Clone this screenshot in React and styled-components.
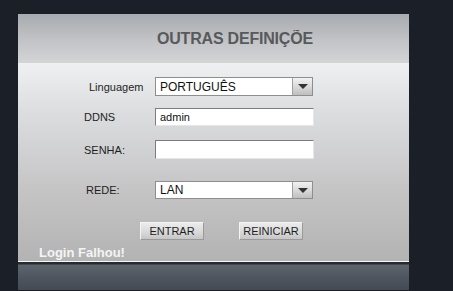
import React from "react";
import styled, { createGlobalStyle } from "styled-components";

const Global = createGlobalStyle`
  html, body {
    margin: 0;
    padding: 0;
    background: #1b2028;
    font-family: "Liberation Sans", Arial, sans-serif;
  }
`;

const Page = styled.div`
  width: 453px;
  height: 291px;
  overflow: hidden;
  background: #1b2028;
  padding: 14px 0 0 18px;
  box-sizing: border-box;
`;

const Panel = styled.div`
  width: 391px;
  display: flex;
  flex-direction: column;
`;

const Header = styled.div`
  height: 49px;
  display: flex;
  align-items: center;
  padding-left: 139px;
  background: linear-gradient(to bottom, #a8abaf 0%, #c2c4c7 55%, #d3d4d6 100%);
`;

const Title = styled.h1`
  margin: 0;
  width: 156px;
  overflow: hidden;
  white-space: nowrap;
  font-size: 16px;
  font-weight: bold;
  color: #58595b;
  letter-spacing: -0.2px;
`;

const Body = styled.div`
  height: 198px;
  box-sizing: border-box;
  padding-top: 14px;
  background: linear-gradient(to bottom, #eff0f2 0%, #dcdddf 25%, #c4c4c5 65%, #b3b3b3 100%);
  display: flex;
  flex-direction: column;
`;

const Row = styled.div`
  display: flex;
  align-items: center;
  height: ${(p) => p.$h}px;
  margin-top: ${(p) => p.$top || 0}px;
`;

const Label = styled.label`
  width: 137px;
  box-sizing: border-box;
  padding-left: ${(p) => p.$indent}px;
  font-size: 11px;
  color: #1e1e1e;
`;

const Select = styled.div`
  width: 158px;
  height: 100%;
  box-sizing: border-box;
  border: 1px solid #8e8e8e;
  background: #fff;
  display: flex;
  align-items: center;
  font-size: 12px;
  color: #111;
  span {
    flex: 1;
    padding-left: 4px;
  }
`;

const Arrow = styled.div`
  width: 20px;
  height: 100%;
  box-sizing: border-box;
  border-left: 1px solid #a0a0a0;
  background: linear-gradient(to bottom, #f2f2f2 0%, #dadada 50%, #bfbfbf 100%);
  display: flex;
  align-items: center;
  justify-content: center;
  &::after {
    content: "";
    border-left: 5px solid transparent;
    border-right: 5px solid transparent;
    border-top: 5px solid #333;
  }
`;

const Input = styled.input`
  width: 159px;
  height: 100%;
  box-sizing: border-box;
  margin: 0;
  padding: 0 4px;
  border: 1px solid;
  border-color: #7c7c7c #e6e6e6 #e6e6e6 #7c7c7c;
  background: #fff;
  font-family: inherit;
  font-size: 11px;
  color: #111;
  outline: none;
`;

const Buttons = styled.div`
  display: flex;
  gap: 35px;
  padding-left: 122px;
  margin-top: 23px;
  height: 18px;
`;

const Button = styled.button`
  width: ${(p) => p.$w}px;
  height: 18px;
  margin: 0;
  padding: 0;
  box-sizing: border-box;
  border: 1px solid;
  border-color: #f4f4f4 #9a9a9a #9a9a9a #f4f4f4;
  background: linear-gradient(to bottom, #ececec 0%, #d8d8d8 60%, #c6c6c6 100%);
  font-family: inherit;
  font-size: 11px;
  color: #1e1e1e;
`;

const Status = styled.div`
  margin-top: 5px;
  padding-left: 21px;
  font-size: 13px;
  font-weight: bold;
  color: #f4f4f4;
  line-height: 15px;
`;

const Footer = styled.div`
  border-top: 1px solid #f5f5f5;
  height: 29px;
  box-sizing: border-box;
  background: linear-gradient(to bottom, #262b32 0px, #262b32 2px, #5d646c 3px, #4d545d 60%, #434a53 100%);
`;

export default function App() {
  return (
    <Page>
      <Global />
      <Panel>
        <Header>
          <Title>OUTRAS DEFINIÇÕES</Title>
        </Header>
        <Body>
          <Row $h={19}>
            <Label $indent={71}>Linguagem</Label>
            <Select>
              <span>PORTUGUÊS</span>
              <Arrow />
            </Select>
          </Row>
          <Row $h={18} $top={12}>
            <Label $indent={66}>DDNS</Label>
            <Input defaultValue="admin" />
          </Row>
          <Row $h={19} $top={14}>
            <Label $indent={66}>SENHA:</Label>
            <Input type="password" />
          </Row>
          <Row $h={18} $top={22}>
            <Label $indent={68}>REDE:</Label>
            <Select>
              <span>LAN</span>
              <Arrow />
            </Select>
          </Row>
          <Buttons>
            <Button $w={64}>ENTRAR</Button>
            <Button $w={64}>REINICIAR</Button>
          </Buttons>
          <Status>Login Falhou!</Status>
        </Body>
        <Footer />
      </Panel>
    </Page>
  );
}
